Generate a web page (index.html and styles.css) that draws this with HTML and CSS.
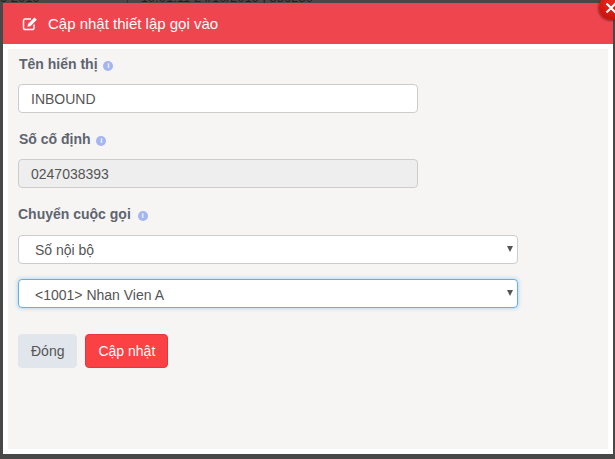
FILE: index.html
```html
<!DOCTYPE html>
<html lang="en">
    <head>
        <meta charset="UTF-8">
        <meta name="viewport" content="width=device-width, initial-scale=1.0">
        <link rel="stylesheet" href="styles.css">
        <title>Cập nhật thiết lập gọi vào</title>
    </head>
    <body>
        <div class="behind">
            <span class="behind-date">9 2019</span>
            <span class="behind-row">10:01:11 24/10/2019 | 386230</span>
        </div>
        <div class="modal">
            <div class="close-btn">
                <svg width="12" height="12" viewBox="0 0 12 12"><path d="M1.500 1.500l9 9M10.500 1.500l-9 9" stroke="#fff" stroke-width="2.200" fill="none"/></svg>
            </div>
            <div class="modal-header">
                <svg class="edit-icon" width="16" height="15" viewBox="0 0 16 15">
                    <path d="M12 8.500v3.200A1.800 1.800 0 0 1 10.200 13.500H3.300A1.800 1.800 0 0 1 1.500 11.700V4.800A1.800 1.800 0 0 1 3.300 3H9" fill="none" stroke="#fff" stroke-width="1.500"/>
                    <path d="M6 8l6.500-6.500 2.300 2.300L8.300 10.300 5.500 10.800z" fill="#fff"/>
                </svg>
                <span>Cập nhật thiết lập gọi vào</span>
            </div>
            <div class="modal-body">
                <div class="field-label">Tên hiển thị <span class="info">i</span></div>
                <input class="text-input" type="text" value="INBOUND">

                <div class="field-label">Số cố định <span class="info">i</span></div>
                <input class="text-input" type="text" value="0247038393" disabled>

                <div class="field-label flush">Chuyển cuộc gọi <span class="info">i</span></div>
                <div class="select-box">Số nội bộ <span class="arrow"></span></div>
                <div class="select-box focused">&lt;1001&gt; Nhan Vien A <span class="arrow"></span></div>

                <div class="buttons">
                    <button class="btn btn-close">Đóng</button>
                    <button class="btn btn-save">Cập nhật</button>
                </div>
            </div>
        </div>
    </body>
</html>
```

FILE: styles.css
```css
html, body {
    margin: 0;
    height: 100%;
    overflow: hidden;
}
body {
    background-color: #484848;
    font-family: "Liberation Sans", Arial, sans-serif;
    font-size: 14px;
    padding: 3px 2px 5px 3px;
    box-sizing: border-box;
}
/* page under the overlay, only the last pixels of a row show above the modal */
.behind {
    position: absolute;
    top: -10px;
    left: 0;
    font-size: 13px;
    line-height: 15px;
    color: #1e1e1e;
    white-space: nowrap;
}
.behind-date {
    display: inline-block;
    width: 127px;
    border-right: 1px solid #333;
}
.behind-row {
    margin-left: 9px;
}
.modal {
    position: relative;
    background-color: #fff;
    height: 451px;
}
.modal-header {
    height: 41px;
    background-color: #ee454e;
    color: #fff;
    display: flex;
    align-items: center;
    padding-left: 19px;
    gap: 10px;
    font-size: 15px;
}
.edit-icon {
    display: block;
}
.close-btn {
    position: absolute;
    top: -9px;
    right: -12px;
    width: 26px;
    height: 26px;
    box-sizing: border-box;
    padding: 2px 2px 0 0;
    border-radius: 50%;
    background: radial-gradient(circle at 50% 30%, #ee2a1c, #b80f08);
    box-shadow: -1px 1px 2px rgba(90, 0, 0, .5);
    display: flex;
    align-items: center;
    justify-content: center;
}
.modal-body {
    margin: 5px;
    height: 400px;
    box-sizing: border-box;
    background-color: #f6f5f3;
    padding: 6px 10px;
}
.field-label {
    font-weight: bold;
    font-size: 14px;
    color: #5e6470;
    height: 18px;
    line-height: 18px;
    margin-bottom: 10.5px;
    padding-left: 1px;
}
.text-input + .field-label {
    margin-bottom: 11.5px;
}
.field-label.flush {
    padding-left: 0;
}
.info {
    display: inline-block;
    width: 10px;
    height: 10px;
    margin-left: 2px;
    border-radius: 50%;
    background-color: #a3b6f2;
    color: #f6f5f3;
    font-size: 8px;
    line-height: 10px;
    text-align: center;
    vertical-align: 1px;
}
.flush .info {
    margin-left: 3px;
}
.text-input {
    display: block;
    width: 400px;
    height: 29px;
    box-sizing: border-box;
    border: 1px solid #ccc;
    border-radius: 4px;
    background-color: #fff;
    padding: 1px 12px 0;
    margin-bottom: 17px;
    font-family: inherit;
    font-size: 14px;
    color: #555;
}
.text-input:disabled {
    background-color: #eee;
}
.select-box {
    position: relative;
    width: 500px;
    height: 29px;
    box-sizing: border-box;
    border: 1px solid #ccc;
    border-radius: 4px;
    background-color: #fff;
    padding-left: 16px;
    line-height: 29px;
    color: #555;
    margin-bottom: 15px;
}
.select-box.focused {
    border-color: #66afe9;
    box-shadow: 0 0 4px rgba(102, 175, 233, .6);
    line-height: 31px;
}
.arrow {
    position: absolute;
    right: 4px;
    top: 10px;
    border-left: 3.500px solid transparent;
    border-right: 3.500px solid transparent;
    border-top: 6px solid #555;
}
.buttons {
    display: flex;
    gap: 8px;
    margin-top: 26.500px;
}
.btn {
    height: 34px;
    border-radius: 4px;
    font-family: inherit;
    font-size: 14px;
    padding: 0 12px;
}
.btn-close {
    background-color: #e1e5ec;
    border: 1px solid #e1e5ec;
    color: #555;
}
.btn-save {
    background-color: #fb4143;
    border: 1px solid #e0383b;
    color: #fff;
}
```
